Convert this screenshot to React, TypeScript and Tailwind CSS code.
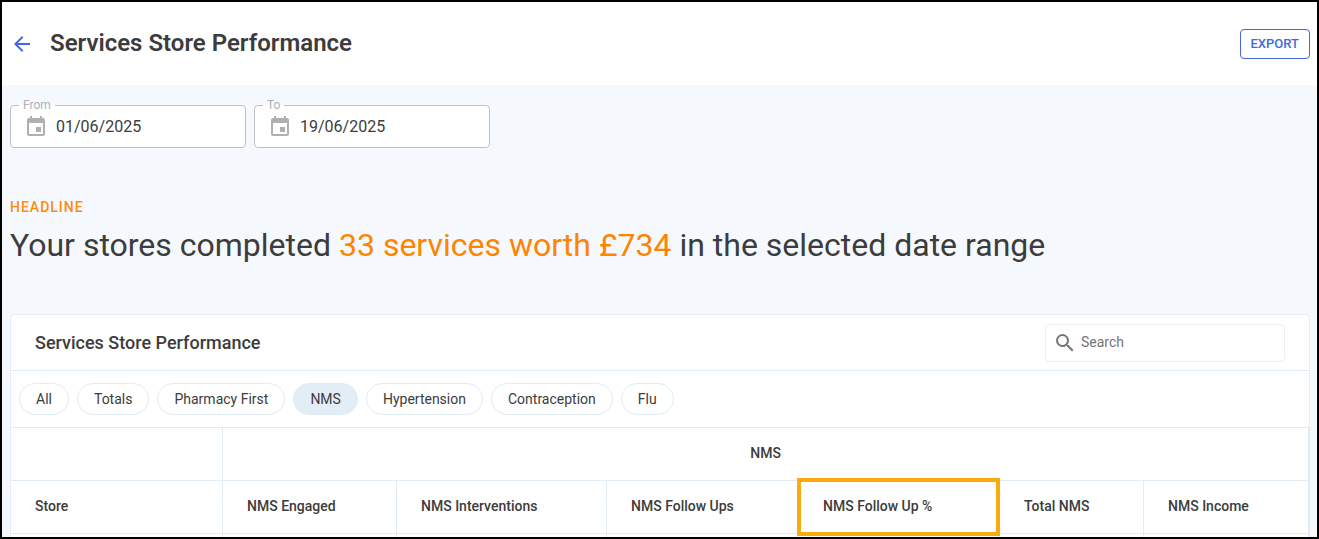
import { useState } from "react";
import { MdArrowBack, MdEvent, MdSearch } from "react-icons/md";

const filters = ["All", "Totals", "Pharmacy First", "NMS", "Hypertension", "Contraception", "Flu"];

const columns = [
  { title: "Store", width: "w-[212px]" },
  { title: "NMS Engaged", width: "w-[174px]" },
  { title: "NMS Interventions", width: "w-[210px]" },
  { title: "NMS Follow Ups", width: "w-[192px]" },
  { title: "NMS Follow Up %", width: "w-[201px]", highlighted: true },
  { title: "Total NMS", width: "w-[144px]" },
  { title: "NMS Income", width: "w-[165px]" },
];

function DateField({ id, label, initial }: { id: string; label: string; initial: string }) {
  const [value, setValue] = useState(initial);

  return (
    <fieldset className="w-[236px] min-w-0 rounded border border-[#c0c0c2] bg-white px-2 pb-1">
      <legend className="px-1 text-xs leading-3 text-[#b0b0b2]">
        <label htmlFor={id} className="block">{label}</label>
      </legend>
      <div className="flex h-8 items-center gap-2 pl-[5px]">
        <MdEvent className="size-6 shrink-0 text-[#b0b0b0]" />
        <input
          id={id}
          type="text"
          value={value}
          onChange={(e) => setValue(e.target.value)}
          className="w-full min-w-0 bg-transparent text-base text-[#3c3c3c] outline-none"
        />
      </div>
    </fieldset>
  );
}

export default function App() {
  const [active, setActive] = useState("NMS");

  return (
    <div className="flex h-screen flex-col overflow-hidden border-2 border-black bg-[#f5f8fd] font-['Roboto',sans-serif] text-[#3c3c3c]">
      <header className="flex shrink-0 items-center justify-between bg-white pt-[27px] pr-[7px] pb-[26px] pl-2">
        <div className="flex items-center gap-4">
          <a href="#back" aria-label="Back" className="text-[#4169e8]">
            <MdArrowBack className="size-6" />
          </a>
          <h1 className="pb-0.5 text-2xl leading-7 font-semibold">Services Store Performance</h1>
        </div>
        <button className="h-[30px] rounded border border-[#4169e1] px-2.5 text-[13px] font-medium text-[#4169e1]">
          EXPORT
        </button>
      </header>

      <main className="flex flex-1 flex-col pt-3.5 pr-[7px] pl-2">
        <div className="flex gap-2">
          <DateField id="from" label="From" initial="01/06/2025" />
          <DateField id="to" label="To" initial="19/06/2025" />
        </div>

        <section className="mt-12">
          <p className="text-sm leading-[22px] font-medium tracking-[1px] text-[#ff8b0f]">HEADLINE</p>
          <h2 className="mt-1.5 text-[32px] leading-[42px]">
            Your stores completed <span className="text-[#ff8400]">33 services worth £734</span> in the selected date range
          </h2>
        </section>

        <section className="mt-12 shrink-0 rounded border border-[#e1ecf5] bg-white">
          <div className="flex h-14 items-center justify-between border-b border-[#e1ecf5] px-6">
            <h3 className="text-lg font-medium">Services Store Performance</h3>
            <div className="flex h-[38px] w-60 items-center gap-1 rounded border border-[#ebeef7] px-[7px]">
              <MdSearch className="size-6 shrink-0 text-[#757575]" />
              <input
                type="search"
                aria-label="Search"
                placeholder="Search"
                className="w-full min-w-0 bg-transparent pb-0.5 text-sm outline-none placeholder:text-[#757575]"
              />
            </div>
          </div>

          <div className="flex h-[57px] items-center gap-2 border-b border-[#e1ecf5] px-2">
            {filters.map((name) => (
              <button
                key={name}
                onClick={() => setActive(name)}
                className={`h-8 rounded-full border border-[#e1ecf5] px-4 text-sm ${active === name ? "bg-[#e3edf6]" : "bg-white"}`}
              >
                {name}
              </button>
            ))}
          </div>

          <table className="w-full table-fixed border-separate border-spacing-0 text-sm">
            <colgroup>
              {columns.map((col) => (
                <col key={col.title} className={col.width} />
              ))}
            </colgroup>
            <thead>
              <tr className="h-[53px]">
                <td className="border-r border-b border-[#e1ecf5]" />
                <th colSpan={6} className="border-r border-b border-[#e1ecf5] pb-0.5 font-medium">NMS</th>
              </tr>
              <tr className="h-[53px]">
                {columns.map((col) => (
                  <th key={col.title} className="relative border-r border-b border-[#e1ecf5] px-6 pb-0.5 text-left font-medium">
                    {col.title}
                    {col.highlighted && (
                      <span className="pointer-events-none absolute -top-[3px] -right-px -bottom-[3px] -left-0.5 z-10 border-4 border-[#faab0c]" />
                    )}
                  </th>
                ))}
              </tr>
            </thead>
            <tbody>
              <tr className="h-[53px]">
                {columns.map((col) => (
                  <td key={col.title} className="border-r border-b border-[#e1ecf5]" />
                ))}
              </tr>
            </tbody>
          </table>
        </section>
      </main>
    </div>
  );
}
